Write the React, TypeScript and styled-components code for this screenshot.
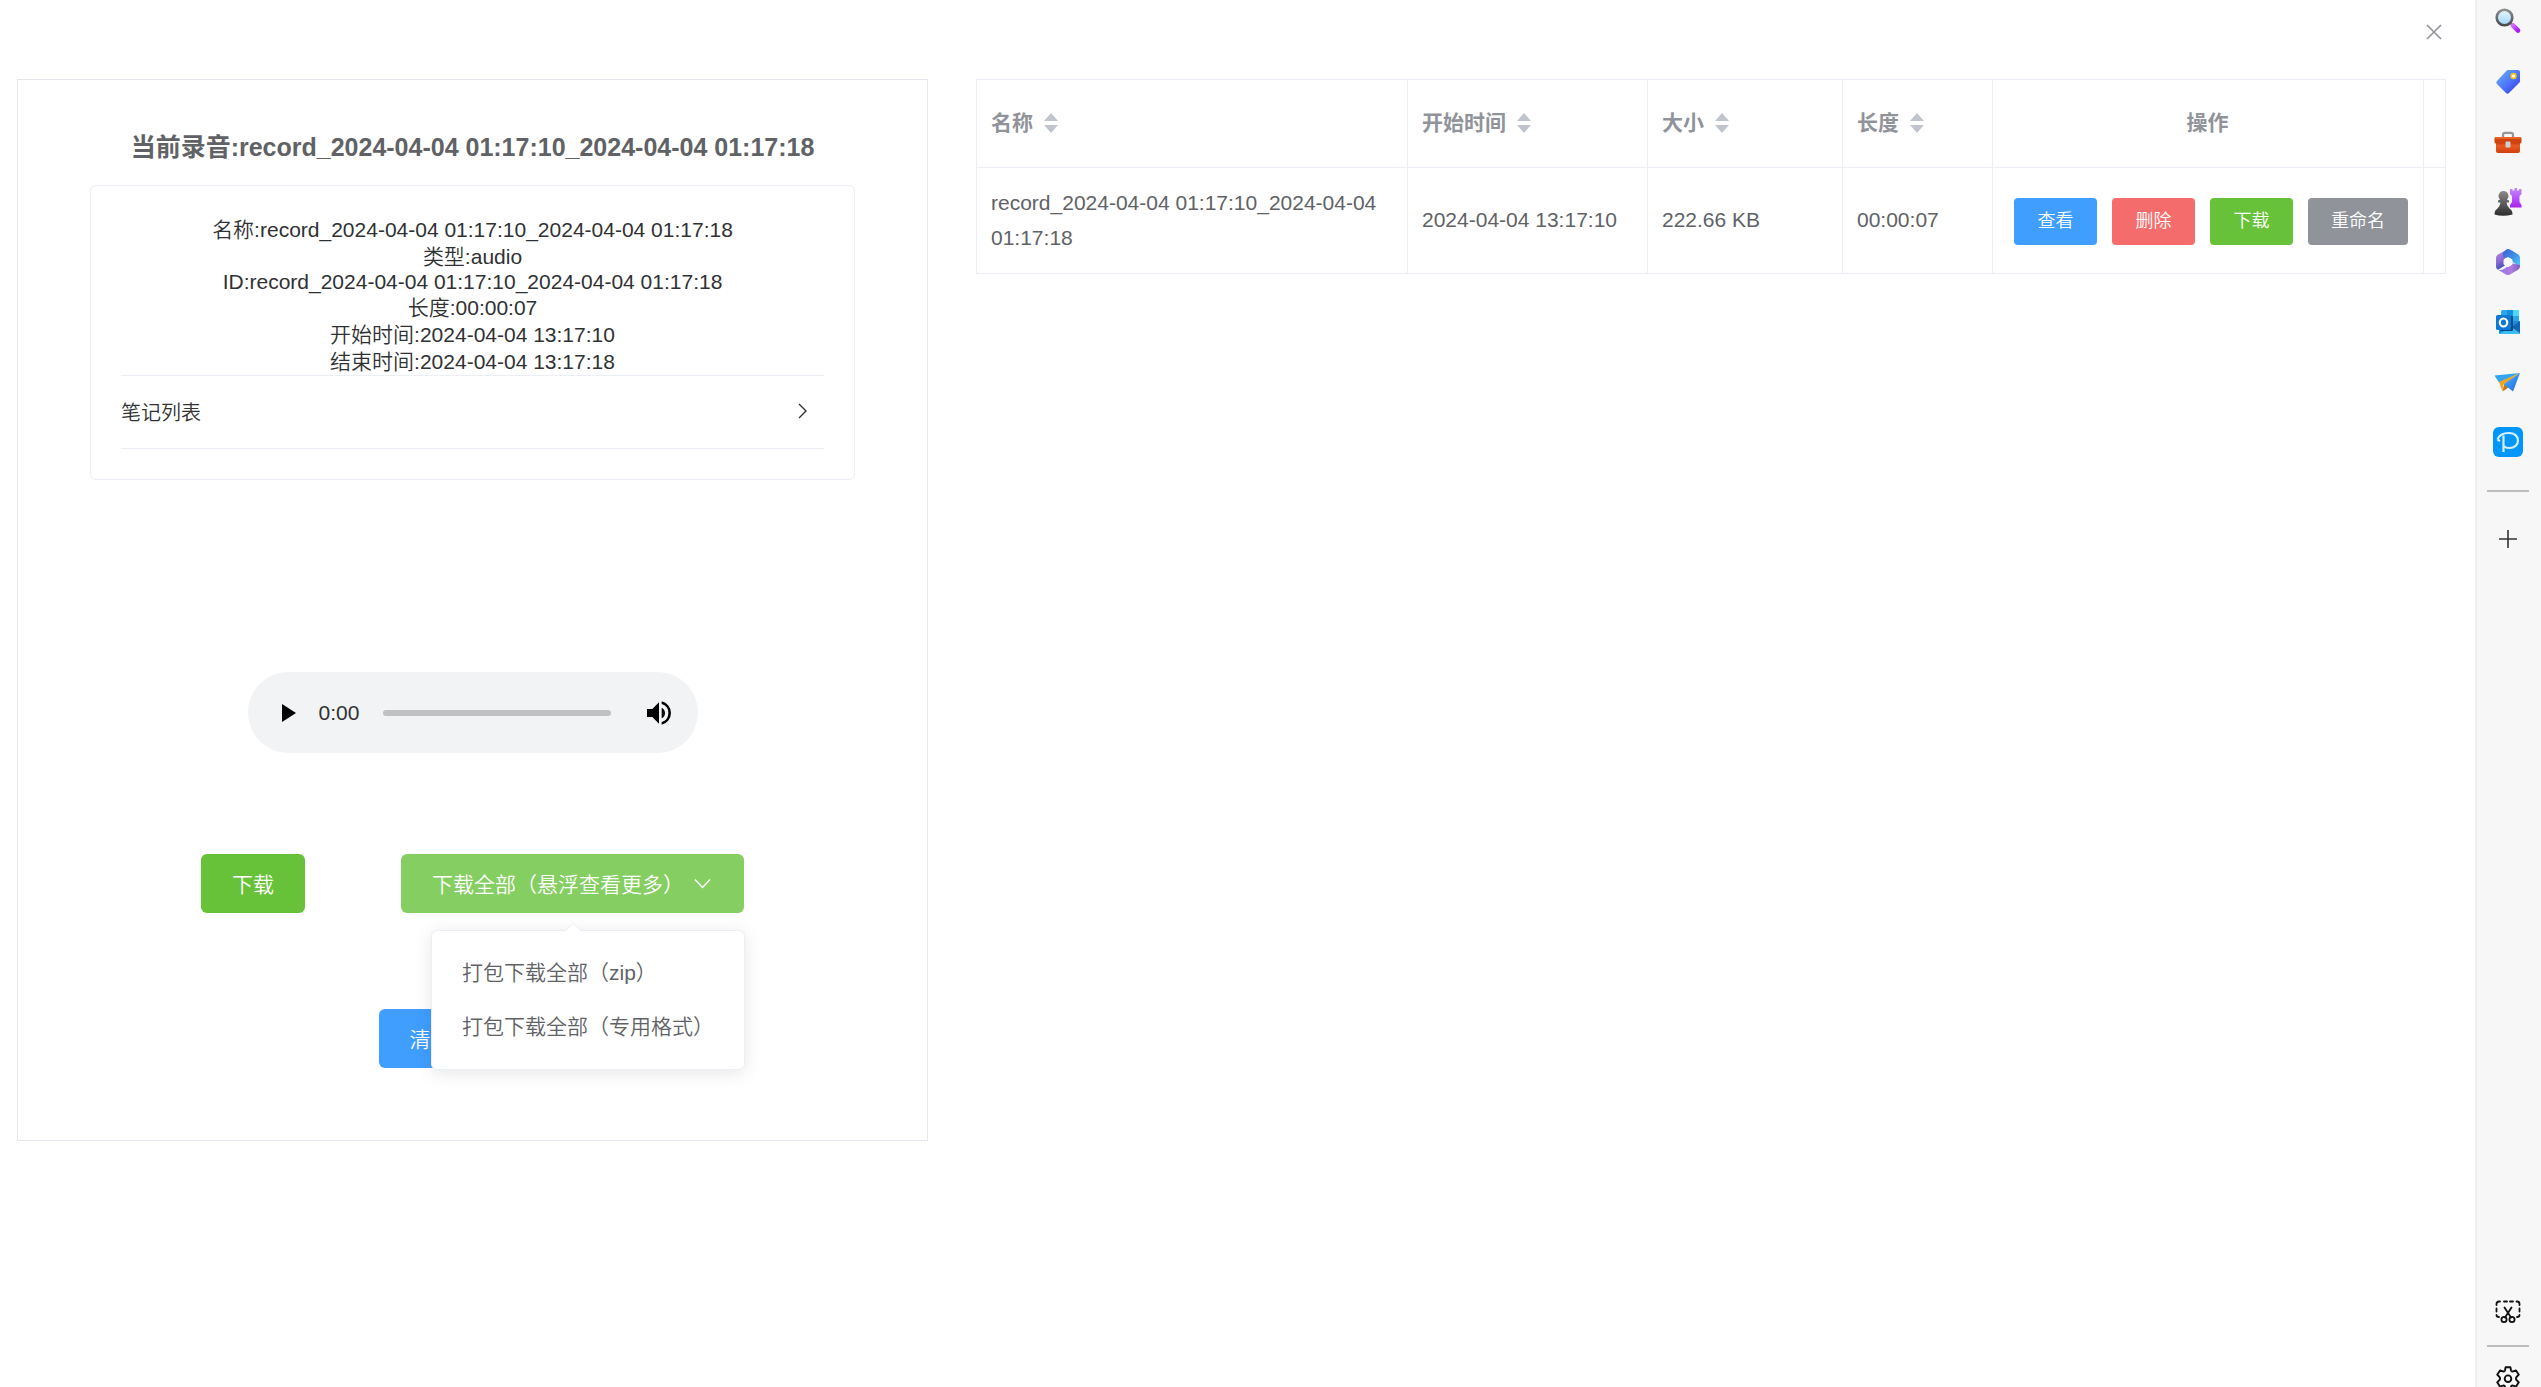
import React from "react";
import styled, { createGlobalStyle } from "styled-components";

const GlobalStyle = createGlobalStyle`
  *, *::before, *::after { box-sizing: border-box; }
  body {
    margin: 0;
    overflow: hidden;
    background: #fff;
    color: #303133;
    font-family: "Liberation Sans", "Noto Sans CJK SC", sans-serif;
    font-size: 21px;
    font-weight: 350;
  }
  button, input { font: inherit; }
`;

const Page = styled.div`
  display: flex;
  height: 100vh;
  overflow: hidden;
`;

const Dialog = styled.main`
  flex: 1;
  min-width: 0;
  display: flex;
  flex-direction: column;
`;

const DialogHeader = styled.header`
  height: 79px;
  padding: 20px 29px 0;
  display: flex;
  justify-content: flex-end;
  align-items: flex-start;
`;

const CloseButton = styled.button`
  width: 24px;
  height: 24px;
  padding: 0;
  border: 0;
  background: none;
  color: #909399;
  cursor: pointer;
  svg { display: block; }
`;

const DialogBody = styled.div`
  display: grid;
  grid-template-columns: 911fr 1470fr;
  gap: 48px;
  align-items: start;
  padding: 0 29px 0 17px;
`;

const Panel = styled.section`
  display: flex;
  flex-direction: column;
  align-items: center;
  border: 1px solid #e4e7ed;
  padding: 49px 72px 72px;
`;

const Title = styled.h3`
  margin: 0 0 20px;
  font-size: 25px;
  line-height: 36px;
  font-weight: 700;
  color: #606266;
`;

const Card = styled.div`
  align-self: stretch;
  border: 1px solid #ebeef5;
  border-radius: 6px;
  padding: 30px;
`;

const InfoLine = styled.div<{ $latin?: boolean }>`
  text-align: center;
  line-height: ${(p) => (p.$latin ? 24 : 27)}px;
`;

const CollapseHeader = styled.button`
  width: 100%;
  height: 74px;
  display: flex;
  align-items: center;
  justify-content: space-between;
  padding: 0 11px 2px 0;
  border: 0;
  border-top: 1px solid #ebeef5;
  border-bottom: 1px solid #ebeef5;
  background: none;
  color: #303133;
  font-size: 20px;
  cursor: pointer;
`;

const Player = styled.div`
  width: 450px;
  height: 81px;
  margin-top: 192px;
  border-radius: 41px;
  background: #f1f3f4;
  display: flex;
  align-items: center;
  padding: 0 21px 0 23px;
`;

const PlayerButton = styled.button`
  width: 36px;
  height: 36px;
  padding: 0;
  border: 0;
  background: none;
  color: #000;
  display: grid;
  place-items: center;
`;

const PlayerTime = styled.span`
  margin-left: 12px;
  width: 64px;
`;

const PlayerTrack = styled.input`
  appearance: none;
  flex: 1;
  min-width: 0;
  height: 6px;
  margin: 0 30px 0 0;
  border-radius: 3px;
  background: #c1c1c1;
  &::-webkit-slider-thumb { appearance: none; width: 0; height: 0; }
`;

const palette = {
  primary: "#409eff",
  success: "#67c23a",
  successHover: "#85ce61",
  danger: "#f56c6c",
  info: "#909399",
};

const Button = styled.button<{ $tone: keyof typeof palette; $small?: boolean }>`
  display: inline-flex;
  align-items: center;
  justify-content: center;
  gap: 8px;
  height: ${(p) => (p.$small ? 47 : 59)}px;
  min-width: 83px;
  padding: ${(p) => (p.$small ? "1px 23px 0" : "0 31px 2px")};
  border: 0;
  border-radius: ${(p) => (p.$small ? 4 : 6)}px;
  background: ${(p) => palette[p.$tone]};
  color: #fff;
  font-size: ${(p) => (p.$small ? 18 : 21)}px;
  white-space: nowrap;
  cursor: pointer;
`;

const ButtonRow = styled.div<{ $space: number }>`
  display: flex;
  justify-content: center;
  gap: 96px;
  margin-top: ${(p) => p.$space}px;
`;

const Dropdown = styled.div`
  position: relative;
`;

const Menu = styled.ul`
  position: absolute;
  z-index: 1;
  top: calc(100% + 17px);
  right: -1px;
  margin: 0;
  padding: 15px 0;
  list-style: none;
  border: 1px solid #ebeef5;
  border-radius: 6px;
  background: #fff;
  box-shadow: 0 3px 18px rgba(0, 0, 0, 0.1);
`;

const MenuArrow = styled.svg`
  position: absolute;
  z-index: 2;
  left: calc(50% - 9px);
  top: calc(100% + 9px);
`;

const MenuItem = styled.button`
  display: block;
  width: 100%;
  padding: 0 30px;
  border: 0;
  background: none;
  color: #606266;
  line-height: 54px;
  text-align: left;
  white-space: nowrap;
  cursor: pointer;
`;

const Table = styled.table`
  width: 100%;
  table-layout: fixed;
  border-collapse: separate;
  border-spacing: 0;
  border-top: 1px solid #ebeef5;
  border-left: 1px solid #ebeef5;
  color: #606266;
`;

const Col = styled.col<{ $w?: number }>`
  width: ${(p) => (p.$w ? `${p.$w}px` : "auto")};
`;

const Th = styled.th<{ $center?: boolean }>`
  height: 88px;
  padding: 0 15px 2px 14px;
  border-right: 1px solid #ebeef5;
  border-bottom: 1px solid #ebeef5;
  color: #909399;
  font-weight: 700;
  line-height: 35px;
  text-align: ${(p) => (p.$center ? "center" : "left")};
`;

const SortLabel = styled.button`
  display: inline-flex;
  align-items: center;
  gap: 11px;
  padding: 0;
  border: 0;
  background: none;
  color: inherit;
  line-height: 35px;
  cursor: pointer;
`;

const Td = styled.td<{ $actions?: boolean }>`
  height: 106px;
  padding: ${(p) => (p.$actions ? "1px 15px 0" : "0 15px 2px 14px")};
  border-right: 1px solid #ebeef5;
  border-bottom: 1px solid #ebeef5;
  line-height: 35px;
`;

const Actions = styled.div`
  display: flex;
  justify-content: flex-end;
  gap: 15px;
`;

const Sidebar = styled.aside`
  width: 66px;
  flex: none;
  display: flex;
  flex-direction: column;
  justify-content: space-between;
  overflow: hidden;
  padding-right: 2px;
  background: #f7f7f7;
  border-left: 2px solid #efefef;
`;

const SideGroup = styled.nav<{ $bottom?: boolean }>`
  display: flex;
  flex-direction: column;
  align-items: center;
  margin: ${(p) => (p.$bottom ? "0 0 -22px" : "-8px 0 0")};
`;

const SideButton = styled.button`
  width: 60px;
  height: 60px;
  padding: 0;
  border: 0;
  background: none;
  display: grid;
  place-items: center;
  cursor: pointer;
`;

const Divider = styled.hr<{ $tight?: boolean }>`
  width: 42px;
  height: 2px;
  margin: ${(p) => (p.$tight ? "3px 0 2px" : "18px 0 17px")};
  border: 0;
  background: #bdbdbd;
`;

const Sort = () => (
  <svg width="14" height="20" viewBox="0 0 14 20" fill="#c0c4cc" aria-hidden="true">
    <path d="M7 0l7 8H0zM7 20l7-8H0z" />
  </svg>
);

const SearchIcon = () => (
  <svg width="28" height="28" viewBox="0 0 28 28">
    <defs>
      <linearGradient id="se1" x1="0" y1="0" x2="0" y2="1"><stop offset="0" stopColor="#e8f6ff" /><stop offset="1" stopColor="#9ed5f8" /></linearGradient>
      <linearGradient id="se2" x1="0" y1="0" x2="0" y2="1"><stop offset="0" stopColor="#8f8f8f" /><stop offset="1" stopColor="#4a4a4a" /></linearGradient>
      <linearGradient id="se3" x1="0" y1="0" x2="1" y2="1"><stop offset="0" stopColor="#d06cff" /><stop offset="1" stopColor="#a51df2" /></linearGradient>
    </defs>
    <path d="M16 14.500l3 3" stroke="#666" strokeWidth="2.500" />
    <circle cx="10.500" cy="9.500" r="7.800" fill="url(#se1)" stroke="url(#se2)" strokeWidth="2.600" />
    <path d="M19 17.500l5 5" stroke="url(#se3)" strokeWidth="4.600" strokeLinecap="round" />
  </svg>
);

const TagIcon = () => (
  <svg width="28" height="28" viewBox="0 0 28 28">
    <defs><linearGradient id="tg" x1="0" y1="0" x2="1" y2="1"><stop offset="0" stopColor="#6cb8ff" /><stop offset="0.600" stopColor="#4a6cf7" /><stop offset="1" stopColor="#2f2de0" /></linearGradient></defs>
    <path d="M14 2h10q2 0 2 2v9q0 1-.8 1.800L15 25q-1.500 1.500-3 0l-9-9q-1.500-1.500 0-3L12.500 2.700Q13 2 14 2z" fill="url(#tg)" />
    <circle cx="19.500" cy="8" r="2.400" fill="#fff" stroke="#f5c518" strokeWidth="1.700" />
  </svg>
);

const ToolboxIcon = () => (
  <svg width="28" height="28" viewBox="0 0 28 28">
    <defs><linearGradient id="tb" x1="0" y1="0" x2="0" y2="1"><stop offset="0" stopColor="#b83208" /><stop offset="0.400" stopColor="#ea5a22" /><stop offset="1" stopColor="#cf3f0e" /></linearGradient></defs>
    <path d="M9 9.500V7q0-2.200 2-2.200h6q2 0 2 2.200v2.500" fill="none" stroke="#979797" strokeWidth="2.200" />
    <rect x="2" y="13" width="24" height="12" rx="2" fill="url(#tb)" />
    <rect x="0.500" y="9" width="27" height="6.500" rx="1.500" fill="#cf430f" />
    <path d="M1.500 10h25" stroke="#ef6a2e" strokeWidth="1.600" />
    <rect x="11.500" y="13.500" width="5" height="6" rx="1" fill="#cfcfcf" />
  </svg>
);

const ChessIcon = () => (
  <svg width="28" height="28" viewBox="0 0 28 28">
    <defs>
      <linearGradient id="ch1" x1="0" y1="0" x2="0" y2="1"><stop offset="0" stopColor="#8a8a8a" /><stop offset="1" stopColor="#2e2e2e" /></linearGradient>
      <linearGradient id="ch2" x1="0" y1="0" x2="0" y2="1"><stop offset="0" stopColor="#c58bff" /><stop offset="1" stopColor="#a821f2" /></linearGradient>
    </defs>
    <path d="M16 1h2.500v1.500h2V0h2.500v2.500h2V1h2.500v5l-2 2v6l2 3v2.500H16V17l2-3V8l-2-2z" fill="url(#ch2)" />
    <path d="M9.500 3a5 5 0 0 1 3.400 8.600l2.100 1v2h-2.500q.5 4 3.500 6.400 2.500 1 2.500 5.500Q9 29 .5 26.500q0-4.500 2.500-5.500 3-2.400 3.500-6.400H4v-2l2.100-1A5 5 0 0 1 9.500 3z" fill="url(#ch1)" />
  </svg>
);

const M365Icon = () => (
  <svg width="28" height="28" viewBox="0 0 28 28">
    <defs>
      <linearGradient id="m1" x1="0" y1="0" x2="0.300" y2="1"><stop offset="0" stopColor="#b58be6" /><stop offset="0.600" stopColor="#8f6bd6" /><stop offset="1" stopColor="#3c4fb6" /></linearGradient>
      <linearGradient id="m2" x1="0" y1="0" x2="1" y2="1"><stop offset="0" stopColor="#3d5fd2" /><stop offset="0.500" stopColor="#3f8ee6" /><stop offset="1" stopColor="#4cd4f8" /></linearGradient>
      <linearGradient id="m3" x1="0" y1="0" x2="1" y2="0"><stop offset="0" stopColor="#8f7be6" /><stop offset="0.600" stopColor="#b17be0" /><stop offset="1" stopColor="#7a5cc8" /></linearGradient>
    </defs>
    <path d="M14 1L4 6.500Q2 7.700 2 10v8.500q0 2.200 2 3.300l7-4.300V9z" fill="url(#m1)" />
    <path d="M9 4.500L12.500 1.500q1.700-1 3.500 0l8 4.700q2 1.200 2 3.500v9l-8.500-5.500V11L9 9.500z" fill="url(#m2)" />
    <path d="M26 17v1.500q0 2-2 3.200l-8 4.800q-2 1.100-4 0L4 21.800q4 1 7-1.500l7-5z" fill="url(#m3)" />
    <path d="M14 9.500l4 2.300v4.600l-4 2.300-4-2.300v-4.600z" fill="#f7f7f7" stroke="#f7f7f7" strokeLinejoin="round" />
  </svg>
);

const OutlookIcon = () => (
  <svg width="28" height="28" viewBox="0 0 28 28">
    <rect x="7" y="2" width="18" height="14" rx="1.500" fill="#28a8ea" />
    <path d="M13 2h6v6h-6z" fill="#1490df" /><path d="M19 2h5q1 0 1 1v5h-6z" fill="#50d9ff" />
    <path d="M5 13h21v12q0 1-1 1H6q-1 0-1-1z" fill="#1490df" />
    <path d="M26 13L6 25.500q.3.500 1 .5h18q1 0 1-1z" fill="#3bbcf2" />
    <path d="M17 19l9 6V13z" fill="#1066b5" />
    <rect x="6" y="8" width="13" height="15" rx="1" fill="#0a4a80" />
    <rect x="2" y="7" width="15" height="15" rx="1.500" fill="#0f78d4" />
    <ellipse cx="9.500" cy="14.500" rx="3.700" ry="4" fill="none" stroke="#fff" strokeWidth="2.200" />
  </svg>
);

const PlaneIcon = () => (
  <svg width="28" height="28" viewBox="0 0 28 28">
    <defs><linearGradient id="pl" x1="0" y1="0" x2="1" y2="1"><stop offset="0" stopColor="#4fb8f8" /><stop offset="1" stopColor="#1b62ea" /></linearGradient></defs>
    <path d="M.5 7.500L26 5 5 14.500z" fill="#33a4f0" />
    <path d="M5 14l21-9-17 12-.5 6.500z" fill="#f5a31a" />
    <path d="M26 5l-7 18.500-5-4-4 3V16z" fill="url(#pl)" />
    <path d="M10 16.500L8.500 23.500l5.500-4z" fill="#c97708" />
  </svg>
);

const PIcon = () => (
  <svg width="30" height="30" viewBox="0 0 30 30">
    <rect width="30" height="30" rx="6" fill="#0096fa" />
    <path d="M4.500 12.500C6 8 11 6 16 6c5.500 0 9 3.200 9 7.500S21.500 21 16.500 21c-2 0-4-.7-5.500-1.700M10.500 8.500V25M4.500 12.500l2.500 1.700" fill="none" stroke="#d4f0ff" strokeWidth="2.200" />
  </svg>
);

const PlusIcon = () => (
  <svg width="18" height="18" viewBox="0 0 18 18"><path d="M9 0v18M0 9h18" stroke="#333" strokeWidth="1.600" /></svg>
);

const SnipIcon = () => (
  <svg width="26" height="26" viewBox="0 0 26 26" fill="none" stroke="#111" strokeWidth="1.800" strokeLinecap="round">
    <path d="M1.500 6V5q0-2.500 2.500-2.500h1M9 2.500h3M15 2.500h3M21.500 2.500h.5q2.500 0 2.500 2.500v1M24.500 9.500v3M24.500 16q0 2-2.500 2M1.500 9.500v3M1.500 16q0 2 2.500 2" />
    <path d="M9.500 8.500l6.500 10M16.500 8.500l-6.500 10" />
    <circle cx="9" cy="20.500" r="2.600" /><circle cx="17" cy="20.500" r="2.600" />
  </svg>
);

const GearIcon = () => (
  <svg width="26" height="26" viewBox="0 0 26 26" fill="none" stroke="#111" strokeWidth="1.900" strokeLinejoin="round">
    <path d="M10.600 1.300h4.800l.6 3q.4 1.500 2 1.100l3-1 2.800 4.300-2.300 2.300q-1.200 1.500 0 3l2.300 2.300-2.800 4.300-3-1q-1.600-.4-2 1.100l-.6 3h-4.800l-.6-3q-.4-1.500-2-1.100l-3 1-2.800-4.300 2.300-2.300q1.200-1.500 0-3L2.200 8.700 5 4.400l3 1q1.600.4 2-1.100z" />
    <circle cx="13" cy="12.700" r="3.300" />
  </svg>
);

const apps = [
  { name: "搜索", Icon: SearchIcon },
  { name: "购物", Icon: TagIcon },
  { name: "工具", Icon: ToolboxIcon },
  { name: "游戏", Icon: ChessIcon },
  { name: "Microsoft 365", Icon: M365Icon },
  { name: "Outlook", Icon: OutlookIcon },
  { name: "Drop", Icon: PlaneIcon },
  { name: "pixiv", Icon: PIcon },
];

const record = {
  name: "record_2024-04-04 01:17:10_2024-04-04 01:17:18",
  type: "audio",
  length: "00:00:07",
  start: "2024-04-04 13:17:10",
  end: "2024-04-04 13:17:18",
  size: "222.66 KB",
};

export default function App() {
  return (
    <Page>
      <GlobalStyle />
      <Dialog>
        <DialogHeader>
          <CloseButton aria-label="关闭">
            <svg width="24" height="24" viewBox="0 0 24 24" stroke="currentColor" strokeWidth="1.600">
              <path d="M5 5l14 14M19 5L5 19" />
            </svg>
          </CloseButton>
        </DialogHeader>
        <DialogBody>
          <Panel>
            <Title>当前录音:{record.name}</Title>
            <Card>
              <InfoLine>名称:{record.name}</InfoLine>
              <InfoLine>类型:{record.type}</InfoLine>
              <InfoLine $latin>ID:{record.name}</InfoLine>
              <InfoLine>长度:{record.length}</InfoLine>
              <InfoLine>开始时间:{record.start}</InfoLine>
              <InfoLine>结束时间:{record.end}</InfoLine>
              <CollapseHeader aria-expanded="false">
                笔记列表
                <svg width="20" height="20" viewBox="0 0 20 20" fill="none" stroke="currentColor" strokeWidth="1.400">
                  <path d="M6 3l7 7-7 7" />
                </svg>
              </CollapseHeader>
            </Card>
            <Player>
              <PlayerButton aria-label="播放">
                <svg width="14" height="18" viewBox="0 0 14 18"><path d="M0 0l14 9-14 9z" /></svg>
              </PlayerButton>
              <PlayerTime>0:00</PlayerTime>
              <PlayerTrack type="range" aria-label="播放进度" min="0" max="7" defaultValue="0" />
              <PlayerButton aria-label="音量">
                <svg width="32" height="32" viewBox="0 0 24 24">
                  <path d="M3 9v6h4l5 5V4L7 9H3zm13.500 3A4.500 4.500 0 0 0 14 7.970v8.050A4.470 4.470 0 0 0 16.500 12zM14 3.230v2.060a7 7 0 0 1 0 13.420v2.060a9 9 0 0 0 0-17.540z" />
                </svg>
              </PlayerButton>
            </Player>
            <ButtonRow $space={101}>
              <Button $tone="success">下载</Button>
              <Dropdown>
                <Button $tone="successHover" aria-haspopup="menu" aria-expanded="true">
                  下载全部（悬浮查看更多）
                  <svg width="21" height="21" viewBox="0 0 21 21" fill="none" stroke="currentColor" strokeWidth="1.500">
                    <path d="M3 7.500l7.500 8 7.500-8" />
                  </svg>
                </Button>
                <Menu>
                  <li><MenuItem>打包下载全部（zip）</MenuItem></li>
                  <li><MenuItem>打包下载全部（专用格式）</MenuItem></li>
                </Menu>
                <MenuArrow width="18" height="10" viewBox="0 0 18 10">
                  <path d="M0 10l1-1 8-8 8 8 1 1z" fill="#fff" />
                  <path d="M1 9l8-8 8 8" fill="none" stroke="#ebeef5" />
                </MenuArrow>
              </Dropdown>
            </ButtonRow>
            <ButtonRow $space={96}>
              <Button $tone="primary">清空全部录音</Button>
            </ButtonRow>
          </Panel>
          <Table>
            <colgroup>
              <Col /><Col $w={240} /><Col $w={195} /><Col $w={150} /><Col $w={431} /><Col $w={22} />
            </colgroup>
            <thead>
              <tr>
                {["名称", "开始时间", "大小", "长度"].map((label) => (
                  <Th key={label} scope="col"><SortLabel>{label}<Sort /></SortLabel></Th>
                ))}
                <Th scope="col" $center>操作</Th>
                <Th as="td" />
              </tr>
            </thead>
            <tbody>
              <tr>
                <Td>{record.name}</Td>
                <Td>{record.start}</Td>
                <Td>{record.size}</Td>
                <Td>{record.length}</Td>
                <Td $actions>
                  <Actions>
                    <Button $small $tone="primary">查看</Button>
                    <Button $small $tone="danger">删除</Button>
                    <Button $small $tone="success">下载</Button>
                    <Button $small $tone="info">重命名</Button>
                  </Actions>
                </Td>
                <Td />
              </tr>
            </tbody>
          </Table>
        </DialogBody>
      </Dialog>
      <Sidebar>
        <SideGroup aria-label="应用">
          {apps.map(({ name, Icon }) => (
            <SideButton key={name} aria-label={name}><Icon /></SideButton>
          ))}
          <Divider />
          <SideButton aria-label="添加"><PlusIcon /></SideButton>
        </SideGroup>
        <SideGroup $bottom aria-label="工具栏">
          <SideButton aria-label="截图"><SnipIcon /></SideButton>
          <Divider $tight />
          <SideButton aria-label="设置"><GearIcon /></SideButton>
        </SideGroup>
      </Sidebar>
    </Page>
  );
}
